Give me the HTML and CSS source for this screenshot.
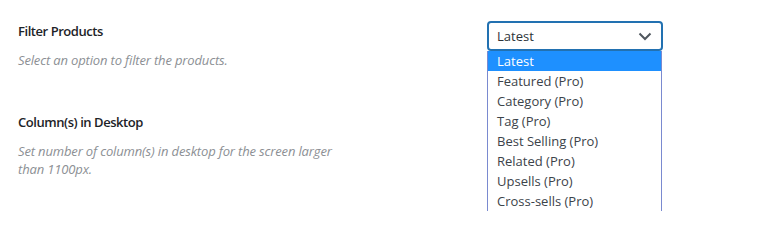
FILE: index.html
```html
<!DOCTYPE html>
<html lang="en">
<head>
<meta charset="utf-8">
<title>Filter Products</title>
<link rel="stylesheet" href="styles.css">
</head>
<body>
<div class="settings">
  <div class="row">
    <div class="info">
      <h3 class="label">Filter Products</h3>
      <p class="desc">Select an option to filter the products.</p>
    </div>
    <div class="field">
      <div class="select">
        <span class="select-value">Latest</span>
        <svg class="chevron" width="14" height="9" viewBox="0 0 14 9" aria-hidden="true"><polyline points="1.5,1.5 7,7 12.5,1.5" fill="none" stroke="#50575e" stroke-width="2"/></svg>
      </div>
      <ul class="options">
        <li class="option is-active">Latest</li>
        <li class="option">Featured (Pro)</li>
        <li class="option">Category (Pro)</li>
        <li class="option">Tag (Pro)</li>
        <li class="option">Best Selling (Pro)</li>
        <li class="option">Related (Pro)</li>
        <li class="option">Upsells (Pro)</li>
        <li class="option">Cross-sells (Pro)</li>
      </ul>
    </div>
  </div>
  <div class="row">
    <div class="info">
      <h3 class="label">Column(s) in Desktop</h3>
      <p class="desc">Set number of column(s) in desktop for the screen larger than 1100px.</p>
    </div>
    <div class="field"></div>
  </div>
</div>
</body>
</html>
```
FILE: styles.css
```css
html, body {
  margin: 0;
  padding: 0;
  background: #ffffff;
}
body {
  font-family: "Open Sans", "Noto Sans", sans-serif;
  color: #1d2327;
  min-height: 211px;
}
.settings {
  display: flex;
  flex-direction: column;
  gap: 44px;
  padding: 22px 0 0 18px;
}
.row {
  display: grid;
  grid-template-columns: 469px 176px;
}
.info {
  display: flex;
  flex-direction: column;
  gap: 11px;
}
.label {
  margin: 0;
  font-size: 13px;
  line-height: 18px;
  font-weight: 600;
  letter-spacing: -0.45px;
  color: #1d2327;
}
.desc {
  margin: 0;
  font-size: 13px;
  line-height: 18px;
  font-style: italic;
  letter-spacing: -0.15px;
  color: #8c8f94;
  max-width: 330px;
}
.field {
  position: relative;
  margin-top: -1px;
}
.select {
  box-sizing: border-box;
  height: 30px;
  border: 2px solid #2271b1;
  border-radius: 4px;
  display: flex;
  align-items: center;
  justify-content: space-between;
  padding: 0 9px 0 8px;
  font-size: 13px;
  color: #2c3338;
}
.chevron {
  display: block;
}
.options {
  position: absolute;
  top: 30px;
  left: 0;
  width: 175px;
  box-sizing: border-box;
  margin: 0;
  padding: 0;
  list-style: none;
  border: 1px solid #7a8ad0;
  border-top: none;
  background: #ffffff;
}
.option {
  height: 20px;
  line-height: 20px;
  padding: 0 9px;
  font-size: 13px;
  color: #3c434a;
}
.option.is-active {
  background: #1e90ff;
  color: #ffffff;
}
```
